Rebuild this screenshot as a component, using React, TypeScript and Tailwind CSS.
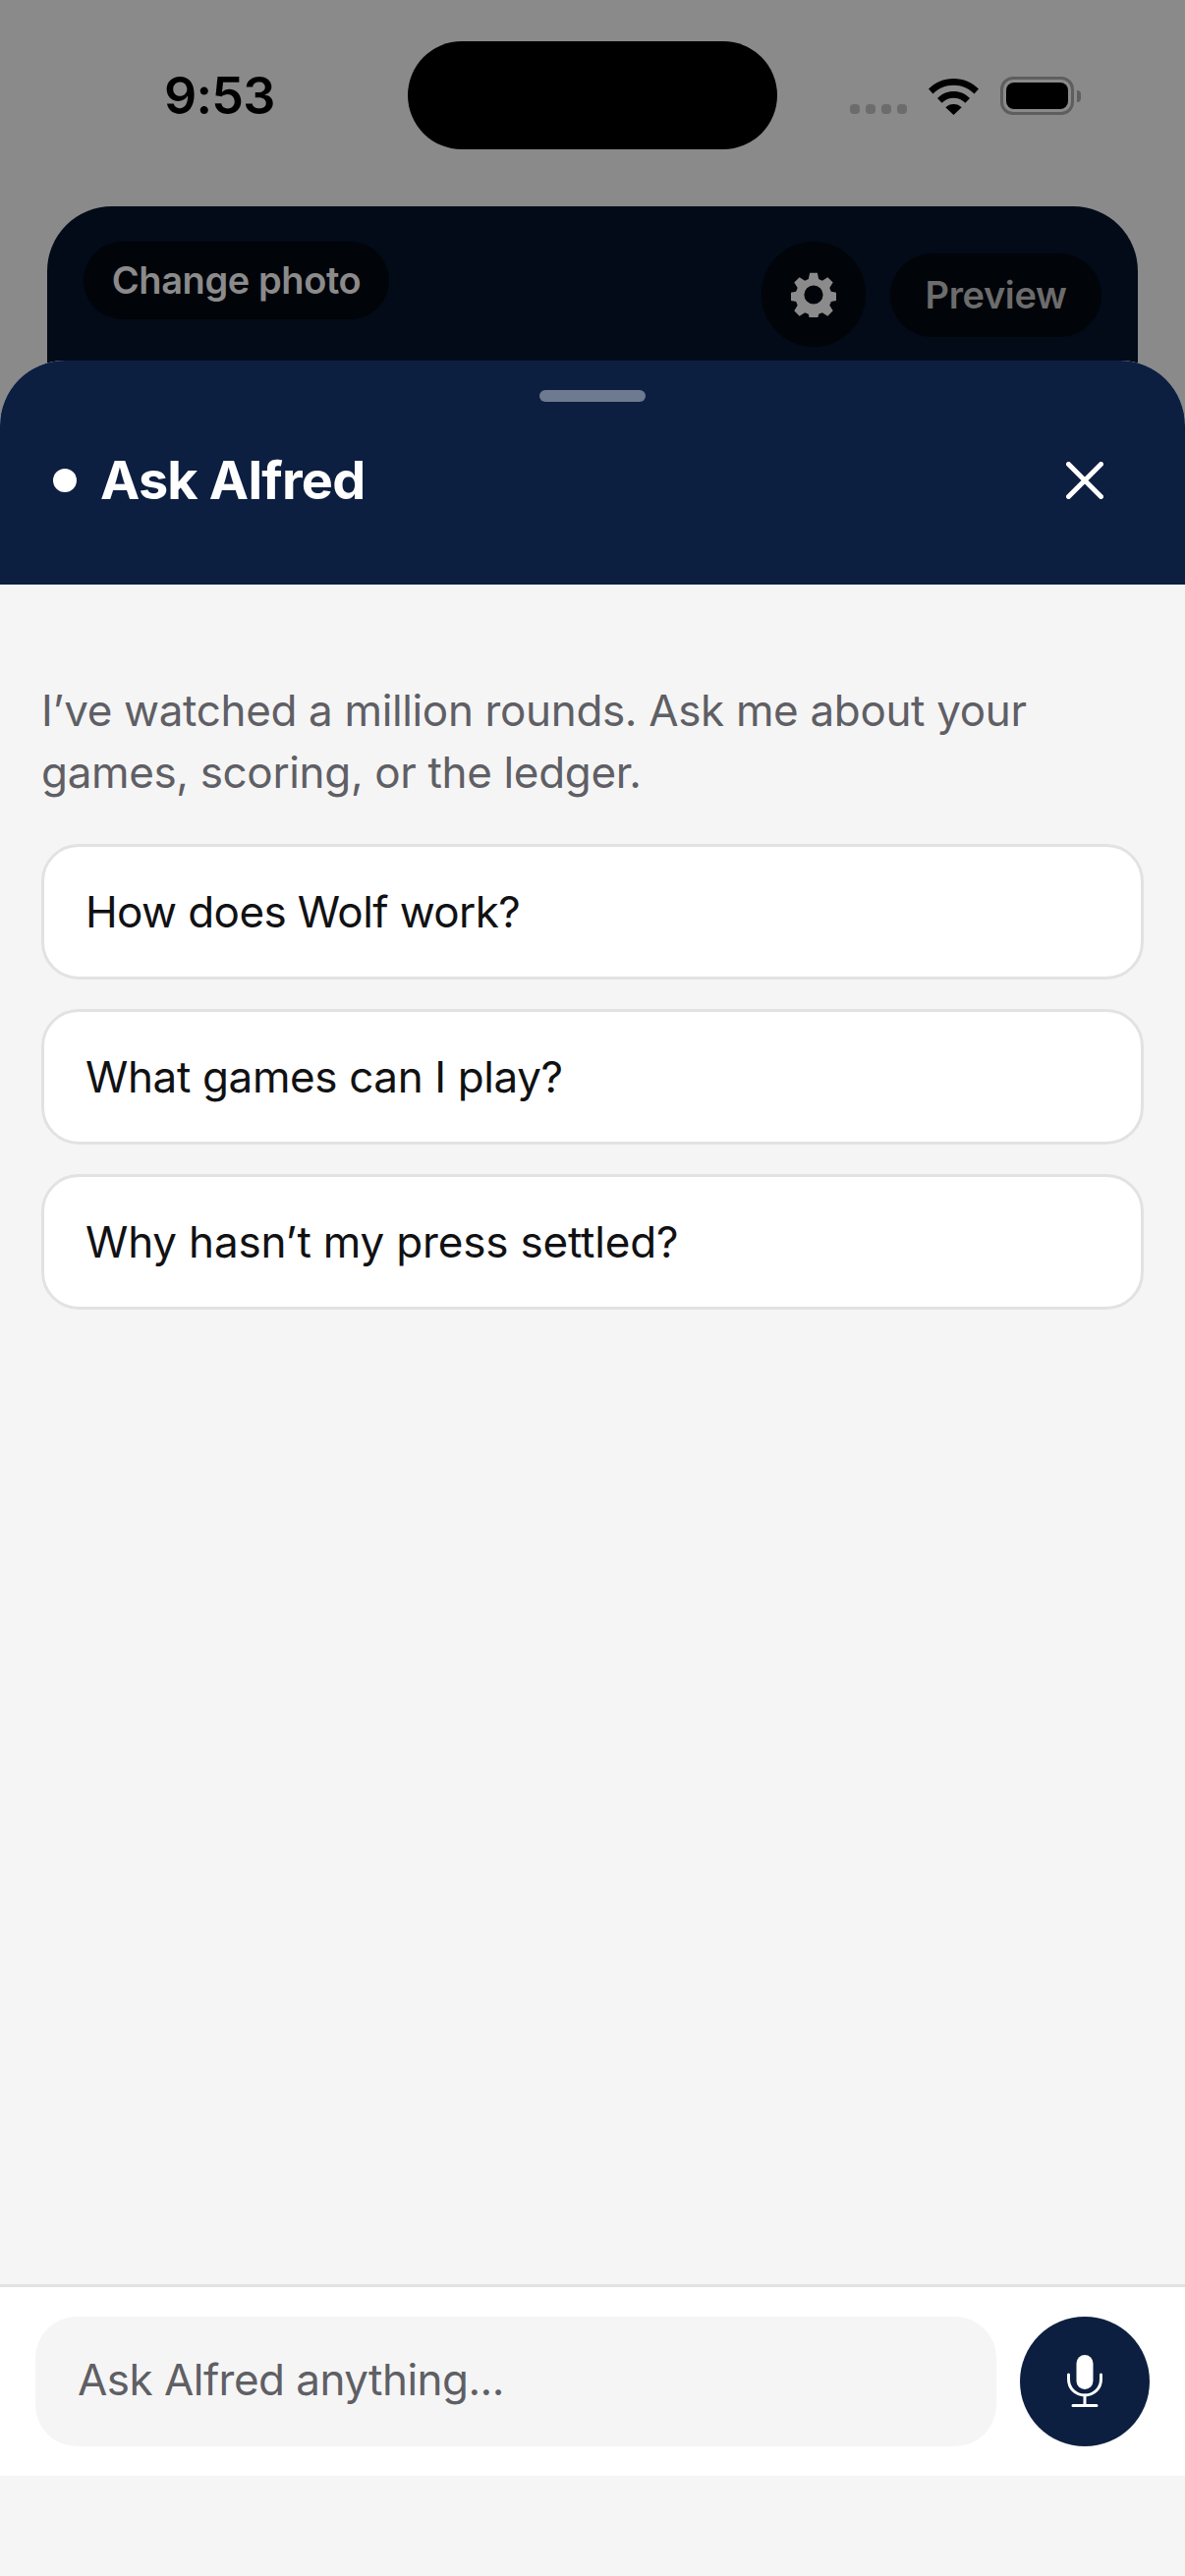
import type { ReactNode } from 'react';

const font = { fontFamily: 'Inter, "Liberation Sans", sans-serif' };

function Gear() {
  return (
    <svg width="46" height="46" viewBox="0 0 24 24" fill="#8b8b8b">
      <path
        fillRule="evenodd"
        d="M10 0.4h4l0.7 3.3 1.9 0.8 2.9-1.8 2.8 2.8-1.8 2.9 0.8 1.9 3.3 0.7v4l-3.3 0.7-0.8 1.9 1.8 2.9-2.8 2.8-2.9-1.8-1.9 0.8-0.7 3.3h-4l-0.7-3.3-1.9-0.8-2.9 1.8-2.8-2.8 1.8-2.9-0.8-1.9-3.3-0.7v-4l3.3-0.7 0.8-1.9-1.8-2.9 2.8-2.8 2.9 1.8 1.9-0.8zM12 7a5 5 0 1 0 0 10a5 5 0 1 0 0-10z"
      />
    </svg>
  );
}

function Wifi() {
  return (
    <svg width="51" height="37" viewBox="0 0 51 37" fill="#000">
      <path d="M25.5 0C35.500 0 44.300 3.900 51 10.600L46.500 15.400C41 10 33.700 6.800 25.500 6.800S10 10 4.500 15.400L0 10.600C6.700 3.900 15.500 0 25.500 0Z" />
      <path d="M25.500 13C32 13 37.500 15.500 42 20L37.400 24.800C34.300 21.700 30.200 19.800 25.500 19.800S16.700 21.700 13.600 24.800L9 20C13.500 15.500 19 13 25.500 13Z" />
      <path d="M25.500 26C28.800 26 31.500 27.200 33.700 29.300L25.500 37L17.300 29.300C19.500 27.200 22.200 26 25.500 26Z" />
    </svg>
  );
}

function Battery() {
  return (
    <div className="flex items-center gap-[3px]">
      <div className="w-[75px] h-[39px] rounded-[13px] border-[3px] border-[#5e5e5e] p-[3px]">
        <div className="w-full h-full rounded-[8px] bg-black" />
      </div>
      <div className="w-[4px] h-[12px] rounded-r-full bg-[#5e5e5e]" />
    </div>
  );
}

function Mic() {
  return (
    <svg width="36" height="54" viewBox="0 0 36 54" fill="none">
      <rect x="9.500" y="0" width="17" height="35" rx="8.500" fill="#fff" />
      <path d="M1.500 20V24.500C1.500 34 8.500 41 18 41S34.500 34 34.500 24.500V20" stroke="#fff" strokeWidth="3" strokeLinecap="round" />
      <path d="M18 41V51.500M6 51.500H30" stroke="#fff" strokeWidth="3" strokeLinecap="round" />
    </svg>
  );
}

function Suggestion({ children }: { children: ReactNode }) {
  return (
    <div className="h-[138px] rounded-[38px] border-[3px] border-[#e2e2e2] bg-white flex items-center pl-[42px] text-[44px] text-[#111113]">
      {children}
    </div>
  );
}

export default function App() {
  return (
    <div className="relative w-[1206px] h-[2622px] overflow-hidden bg-[#8a8a8a] antialiased" style={font}>
      {/* Dimmed page behind the sheet */}
      <div className="relative h-[210px]">
        <div className="absolute left-[415px] top-[42px] w-[376px] h-[110px] rounded-[55px] bg-black" />
        <div className="flex items-start justify-between pl-[167px] pr-[106px] pt-[66px]">
          <span className="text-[52px] leading-[63px] font-semibold text-black tracking-[-0.8px]">9:53</span>
          <div className="flex items-end mt-[12px]">
            <div className="flex gap-[6px] mb-[1px] mr-[22px]">
              <div className="w-[10px] h-[10px] rounded-[4px] bg-[#6c6c6c]" />
              <div className="w-[10px] h-[10px] rounded-[4px] bg-[#6c6c6c]" />
              <div className="w-[10px] h-[10px] rounded-[4px] bg-[#6c6c6c]" />
              <div className="w-[10px] h-[10px] rounded-[4px] bg-[#6c6c6c]" />
            </div>
            <div className="mr-[22px]"><Wifi /></div>
            <Battery />
          </div>
        </div>
      </div>
      <div className="mx-[48px] h-[400px] rounded-t-[66px] bg-[#030b19] flex items-start justify-between pl-[37px] pr-[37px] pt-[36px]">
        <div className="h-[79px] w-[311px] rounded-full bg-[#010409] flex items-center justify-center text-[38px] font-semibold text-[#8b8b8b] tracking-[-0.4px]">
          Change photo
        </div>
        <div className="flex items-center gap-[25px]">
          <div className="w-[106px] h-[107px] rounded-full bg-[#010409] flex items-center justify-center"><Gear /></div>
          <div className="h-[85px] w-[215px] mt-[2px] rounded-full bg-[#010409] flex items-center justify-center text-[38px] font-semibold text-[#6c6c6c] tracking-[-0.4px]">
            Preview
          </div>
        </div>
      </div>

      {/* Bottom sheet */}
      <div className="absolute left-0 right-0 top-[367px] bottom-0 rounded-t-[66px] bg-[#f5f5f5] overflow-hidden flex flex-col">
        <div className="relative h-[228px] bg-[#0d1f40] shrink-0">
          <div className="absolute left-[549px] top-[30px] w-[108px] h-[12px] rounded-full bg-[#6e7a8f]" />
          <div className="flex items-center h-full pt-[16px] pl-[54px] pr-[83px]">
            <div className="w-[24px] h-[24px] rounded-full bg-white mr-[24px]" />
            <span className="text-[54px] font-bold text-white leading-none flex-1 tracking-[-0.8px]">Ask Alfred</span>
            <svg width="38" height="38" viewBox="0 0 38 38" fill="none">
              <path d="M2.500 2.500L35.500 35.500M35.500 2.500L2.500 35.500" stroke="#fff" strokeWidth="5" strokeLinecap="round" />
            </svg>
          </div>
        </div>
        <div className="flex-1 px-[42px] pt-[97px]">
          <p className="text-[44px] leading-[63px] text-[#5f5f65] tracking-[-0.35px]">
            I’ve watched a million rounds. Ask me about your games, scoring, or the ledger.
          </p>
          <div className="mt-[41px] flex flex-col gap-[30px]">
            <Suggestion><span className="tracking-[-0.6px]">How does Wolf work?</span></Suggestion>
            <Suggestion><span className="tracking-[-0.38px]">What games can I play?</span></Suggestion>
            <Suggestion><span className="tracking-[-0.18px]">Why hasn’t my press settled?</span></Suggestion>
          </div>
        </div>
        <div className="h-[195px] shrink-0 border-t-[3px] border-[#e2e2e2] bg-white flex items-start pl-[36px] pt-[30px] gap-[24px]">
          <div className="w-[978px] h-[132px] rounded-[42px] bg-[#f5f5f5] flex items-center pl-[43px] pb-[5px] text-[44px] text-[#5f5f65] tracking-[-0.54px]">
            Ask Alfred anything...
          </div>
          <div className="w-[132px] h-[132px] rounded-full bg-[#0d1f40] flex items-center justify-center"><Mic /></div>
        </div>
        <div className="h-[102px] shrink-0" />
      </div>
    </div>
  );
}
